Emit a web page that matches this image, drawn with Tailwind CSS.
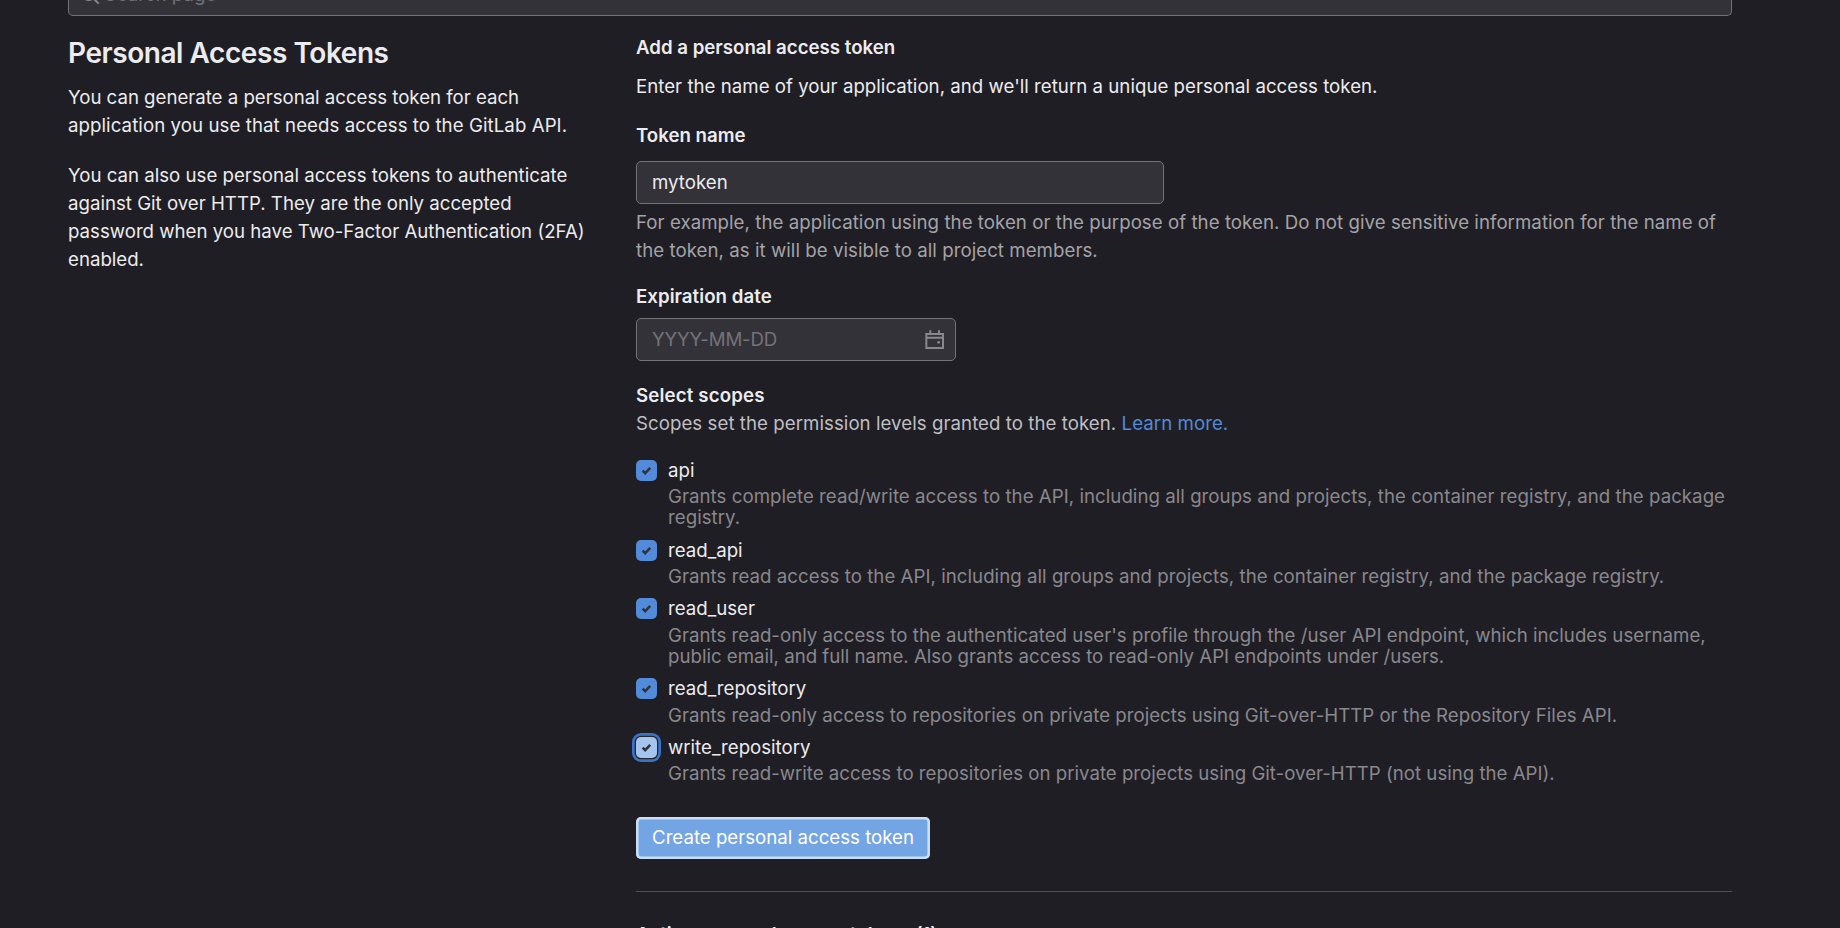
<!DOCTYPE html>
<html lang="en">
<head>
<meta charset="utf-8">
<title>Personal Access Tokens</title>
<script src="https://cdn.jsdelivr.net/npm/@tailwindcss/browser@4"></script>
</head>
<body class="h-[928px] overflow-hidden bg-[#1f1e24] font-['Inter',sans-serif] text-[18.67px] leading-[28px] text-[#ececef]">
<div class="ml-[68px] flex h-[928px] w-[1664px] flex-col overflow-hidden">
  <div class="flex h-[16px] shrink-0 items-end overflow-hidden rounded-b-[5px] border border-t-0 border-[#737278] bg-[#333238] pl-[10.7px] text-[#737278]">
    <svg class="mb-[8.5px] size-[21.33px] shrink-0" viewBox="0 0 16 16" fill="none" stroke="#89888d" stroke-width="1.5"><circle cx="6.5" cy="6.5" r="4.7"/><path d="M10 10l4 4"/></svg>
    <span class="mb-[6px] ml-[3.7px]">Search page</span>
  </div>
  <div class="flex">
    <section class="w-[568px] shrink-0 pt-[18px]">
      <h4 class="text-[28px] leading-[38px] font-semibold tracking-[-0.44px]">Personal Access Tokens</h4>
      <p class="mt-[12px]"><span class="tracking-[-0.02px]">You can generate a personal access token for each</span><br><span class="tracking-[0.07px]">application you use that needs access to the GitLab API.</span></p>
      <p class="mt-[22px]">You can also use personal access tokens to authenticate<br>against Git over HTTP. They are the only accepted<br>password when you have Two-Factor Authentication (2FA)<br>enabled.</p>
    </section>
    <section class="w-[1096px] shrink-0 pt-[18px]">
      <h5 class="font-semibold">Add a personal access token</h5>
      <p class="mt-[11px] tracking-[0.02px]">Enter the name of your application, and we'll return a unique personal access token.</p>
      <div class="mt-[21px] font-semibold">Token name</div>
      <div class="mt-[11px] flex h-[43px] w-[528px] items-center rounded-[5px] border border-[#737278] bg-[#333238] pl-[15px]">mytoken</div>
      <p class="mt-[5px] tracking-[0.047px] text-[#a4a3a8]">For example, the application using the token or the purpose of the token. Do not give sensitive information for the name of<br>the token, as it will be visible to all project members.</p>
      <div class="mt-[18px] font-semibold tracking-[0.04px]">Expiration date</div>
      <div class="mt-[7px] flex h-[43px] w-[320px] items-center justify-between rounded-[5px] border border-[#737278] bg-[#333238] pr-[10px] pl-[15px] text-[#737278]"><span class="tracking-[-0.2px]">YYYY-MM-DD</span>
        <svg class="size-[21.33px]" viewBox="0 0 16 16" fill="none" stroke="#89888d" stroke-width="1.5"><path d="M1.75 3.75h12.5v10.5H1.75zM1.75 6.5h12.5M4.75 1v3M11.25 1v3"/><circle cx="11" cy="10" r="1" fill="#89888d" stroke="none"/></svg>
      </div>
      <div class="mt-[21px] font-semibold tracking-[0.15px]">Select scopes</div>
      <div class="tracking-[0.05px] text-[#bfbfc3]">Scopes set the permission levels granted to the token. <a class="text-[#528bd9]">Learn more.</a></div>
      <div class="mt-[18.6px] flex flex-col gap-[7.83px] text-[#89888d]">
        <div class="flex gap-[11px]">
          <svg class="mt-[3px] size-[21px] shrink-0 rounded-[5px] bg-[#528bd9]" viewBox="0 0 21 21" fill="none" stroke="#333238" stroke-width="2.5"><path d="M6.6 10.6l2.6 2.5 5-5.3"/></svg>
          <div><div class="text-[#ececef]">api</div><div class="mt-[1.5px] leading-[21.33px] tracking-[0.038px]">Grants complete read/write access to the API, including all groups and projects, the container registry, and the package<br>registry.</div></div>
        </div>
        <div class="flex gap-[11px]">
          <svg class="mt-[3px] size-[21px] shrink-0 rounded-[5px] bg-[#528bd9]" viewBox="0 0 21 21" fill="none" stroke="#333238" stroke-width="2.5"><path d="M6.6 10.6l2.6 2.5 5-5.3"/></svg>
          <div><div class="text-[#ececef]">read_api</div><div class="mt-[1.5px] leading-[21.33px] tracking-[0.038px]">Grants read access to the API, including all groups and projects, the container registry, and the package registry.</div></div>
        </div>
        <div class="flex gap-[11px]">
          <svg class="mt-[3px] size-[21px] shrink-0 rounded-[5px] bg-[#528bd9]" viewBox="0 0 21 21" fill="none" stroke="#333238" stroke-width="2.5"><path d="M6.6 10.6l2.6 2.5 5-5.3"/></svg>
          <div><div class="text-[#ececef]">read_user</div><div class="mt-[1.5px] leading-[21.33px]"><span class="tracking-[0.02px]">Grants read-only access to the authenticated user's profile through the /user API endpoint, which includes username,</span><br>public email, and full name. Also grants access to read-only API endpoints under /users.</div></div>
        </div>
        <div class="flex gap-[11px]">
          <svg class="mt-[3px] size-[21px] shrink-0 rounded-[5px] bg-[#528bd9]" viewBox="0 0 21 21" fill="none" stroke="#333238" stroke-width="2.5"><path d="M6.6 10.6l2.6 2.5 5-5.3"/></svg>
          <div><div class="text-[#ececef]">read_repository</div><div class="mt-[1.5px] leading-[21.33px]">Grants read-only access to repositories on private projects using Git-over-HTTP or the Repository Files API.</div></div>
        </div>
        <div class="flex gap-[11px]">
          <svg class="mt-[3px] size-[21px] shrink-0 rounded-[5px] bg-[#a5c5ef] shadow-[0_0_0_1.3px_#28272d,0_0_0_4px_#3a73c4]" viewBox="0 0 21 21" fill="none" stroke="#333238" stroke-width="2.5"><path d="M6.6 10.6l2.6 2.5 5-5.3"/></svg>
          <div><div class="text-[#ececef]">write_repository</div><div class="mt-[1.5px] leading-[21.33px]">Grants read-write access to repositories on private projects using Git-over-HTTP (not using the API).</div></div>
        </div>
      </div>
      <button class="mt-[32.4px] flex h-[42px] w-[294px] items-center justify-center rounded-[5px] bg-[#73a4e4] text-white inset-ring-[2.6px] inset-ring-[#c9def7]">Create personal access token</button>
      <hr class="mt-[32px] border-t border-[#4f4e54]">
      <h5 class="mt-[29px] font-semibold whitespace-nowrap">Active personal access tokens (1)</h5>
    </section>
  </div>
</div>
</body>
</html>
